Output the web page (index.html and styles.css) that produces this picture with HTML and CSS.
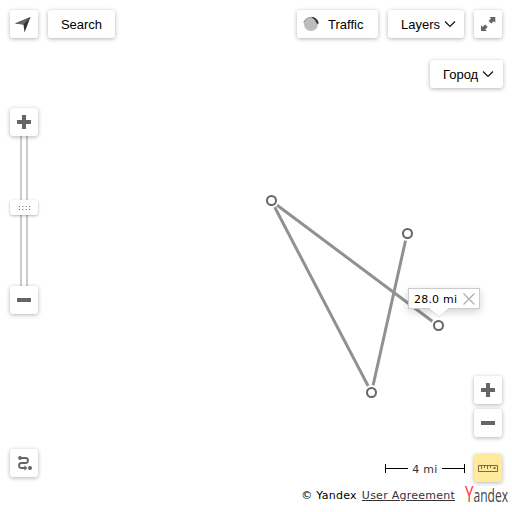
FILE: index.html
```
<!DOCTYPE html>
<html lang="en">
<head>
<meta charset="utf-8">
<title>Map</title>
<link rel="stylesheet" href="styles.css">
</head>
<body>
<div class="map">
  <svg class="route" viewBox="0 0 512 512">
    <g class="line">
      <path d="M407 234 371.500 392.500 271.500 201 438 325.500"/>
    </g>
    <g class="halo">
      <circle cx="271.500" cy="200.500" r="7.500"/><circle cx="407.500" cy="233.500" r="7.500"/><circle cx="371.500" cy="392.500" r="7.500"/><circle cx="438.500" cy="325.500" r="7.500"/>
    </g>
    <g class="node">
      <circle cx="271.500" cy="200.500" r="4.500"/><circle cx="407.500" cy="233.500" r="4.500"/><circle cx="371.500" cy="392.500" r="4.500"/><circle cx="438.500" cy="325.500" r="4.500"/>
    </g>
  </svg>
  <div class="balloon"><span>28.0 mi</span>
    <svg width="12" height="12" viewBox="0 0 12 12"><path d="M.5.5l11 11M11.500.5l-11 11" fill="none" stroke="#aaa" stroke-width="1.100"/></svg>
    <svg class="tail" width="20" height="10" viewBox="0 0 20 10"><path d="M0 0H20L10 9Z" fill="#fff"/><path d="M0 .5 10 9 20 .5" fill="none" stroke="#ccc" stroke-width=".7"/></svg>
  </div>

  <div class="controls">
    <div class="left">
      <div class="row">
        <button class="btn icon"><svg width="28" height="28" viewBox="0 0 28 28"><path d="M5 13.500 20.500 7 14.500 22.500 13.500 14.500Z" fill="#333"/><path d="M5 13.500 20.500 7 13.500 14.500Z" fill="#666"/></svg></button>
        <button class="btn search">Search</button>
      </div>
      <div class="slider">
        <button class="btn icon"><svg width="28" height="28" viewBox="0 0 28 28"><path d="M12 7h4v5h5v4h-5v5h-4v-5H7v-4h5z" fill="#666"/></svg></button>
        <div class="track"><div class="handle"><svg width="11" height="4" viewBox="0 0 11 4"><path d="M0 .5h11M0 3.500h11" stroke="#666" stroke-dasharray="1 2.330"/></svg></div></div>
        <button class="btn icon"><svg width="28" height="28" viewBox="0 0 28 28"><path d="M7 12h14v4H7z" fill="#666"/></svg></button>
      </div>
      <button class="btn icon route-btn"><svg width="28" height="28" viewBox="0 0 28 28"><circle cx="10" cy="9" r="1.900" fill="#666"/><circle cx="20" cy="19" r="2" fill="#666"/><path d="M10 9H15.500Q18 9 18 11.500T15.500 14H11.500Q9 14 9 16.500T11.500 19H15" fill="none" stroke="#666" stroke-width="1.800"/><path d="M14.500 16.200 17.300 19 14.500 21.800Z" fill="#666"/></svg></button>
    </div>

    <div class="right">
      <div class="row">
        <button class="btn traffic"><svg width="16" height="16" viewBox="0 0 16 16"><circle cx="8" cy="8" r="7" fill="#bcbcbc"/><path d="M.8 7A7 7 0 0 1 8 1.500" fill="none" stroke="#999" stroke-width="1.200"/><path d="M8 .8Q14.500 1.200 15.700 7.500L14.200 8Q12.500 3.500 8 .8Z" fill="#333"/></svg><span>Traffic</span></button>
        <button class="btn layers"><span>Layers</span><svg width="12" height="8" viewBox="0 0 12 8"><path d="M1 1.500 6 6.500 11 1.500" fill="none" stroke="#111" stroke-width="1.200"/></svg></button>
        <button class="btn icon"><svg width="28" height="28" viewBox="0 0 28 28"><path d="M15.500 7H21.300V12.800L19.600 11.300 17.400 13.600 14.600 10.900 17 8.600ZM7 15.200 8.700 16.900 11.100 14.400 13.700 17.100 11.300 19.400 12.900 21H7Z" fill="#666"/></svg></button>
      </div>
      <button class="btn city"><span>Город</span><svg width="12" height="8" viewBox="0 0 12 8"><path d="M1 1.500 6 6.500 11 1.500" fill="none" stroke="#111" stroke-width="1.200"/></svg></button>
      <div class="zoom">
        <button class="btn icon"><svg width="28" height="28" viewBox="0 0 28 28"><path d="M12 7h4v5h5v4h-5v5h-4v-5H7v-4h5z" fill="#666"/></svg></button>
        <button class="btn icon"><svg width="28" height="28" viewBox="0 0 28 28"><path d="M7 12h14v4H7z" fill="#666"/></svg></button>
      </div>
      <div class="measure">
        <div class="scale"><i></i><span>4 mi</span><i class="end"></i></div>
        <button class="btn icon active"><svg width="28" height="28" viewBox="0 0 28 28"><path d="M4.500 11.500h19v6h-19z" fill="none" stroke="#776c48"/><path d="M7.500 12v3M10.500 12v2M13.500 12v3M16.500 12v2" stroke="#776c48"/><path d="M19.500 13h2v2h-2z" fill="#776c48"/></svg></button>
      </div>
      <div class="legal"><span>© Yandex</span><a>User Agreement</a>
        <svg class="logo" width="44" height="28" viewBox="0 0 44 28"><text transform="translate(1 21) scale(.72 1)" font-size="21" fill="#444"><tspan fill="#f33">Y</tspan><tspan font-size="19" textLength="48" lengthAdjust="spacingAndGlyphs">andex</tspan></text></svg>
      </div>
    </div>
  </div>
</div>
</body>
</html>
```
FILE: styles.css
```
* { box-sizing: border-box; }
body { margin: 0; background: #fff; }
.map { position: relative; width: 512px; height: 512px; overflow: hidden; }
.route { position: absolute; left: 0; top: 0; width: 512px; height: 512px; }
.line { fill: none; stroke: #919191; stroke-width: 3; }
.halo { fill: #fff; }
.node { fill: #fff; stroke: #666; stroke-width: 2; }
.balloon {
  position: absolute; left: 408px; top: 288px; width: 72px; height: 21px;
  display: flex; align-items: center; justify-content: space-between;
  padding: 1px 4px 0 5px; background: #fff; border: 1px solid #ccc;
  box-shadow: 0 3px 9px rgba(0,0,0,.18);
  font: 11px "DejaVu Sans", sans-serif; letter-spacing: .2px; color: #000; white-space: nowrap;
}
.tail { position: absolute; left: 20px; top: 19px; }
.controls { position: relative; display: flex; justify-content: space-between; height: 512px; padding: 10px 4px 0 10px; }
.row { display: flex; gap: 10px; }
.btn {
  display: flex; align-items: center; height: 28px; padding: 0; border: 0;
  border-radius: 3px; background: #fff; box-shadow: 0 1px 4px rgba(0,0,0,.3);
  font: 13px "Liberation Sans", Arial, sans-serif; color: #000;
}
.btn svg { display: block; flex: none; }
.icon { width: 28px; }
.search { width: 67px; justify-content: center; }
.slider { display: flex; flex-direction: column; width: 28px; margin-top: 70px; }
.slider .icon { position: relative; }
.track {
  width: 8px; height: 150px; margin-left: 10px; padding-top: 64px;
  border: solid #ccc; border-width: 0 2px;
}
.handle {
  display: flex; align-items: center; justify-content: center;
  width: 28px; height: 15px; margin-left: -12px; border-radius: 3px;
  background: #fff; box-shadow: 0 1px 3px rgba(0,0,0,.3);
}
.route-btn { margin-top: 135px; }
.right { display: flex; flex-direction: column; align-items: flex-end; }
.right > .row, .zoom, .measure { margin-right: 6px; }
.traffic { width: 81px; padding-left: 6px; gap: 9px; }
.layers { width: 76px; padding-left: 13px; gap: 4px; }
.city { width: 73px; margin: 22px 5px 0 0; padding-left: 13px; gap: 4px; }
.zoom { display: flex; flex-direction: column; gap: 5px; margin-top: 288px; }
.measure { display: flex; align-items: center; gap: 9px; margin-top: 17px; }
.active { background: #ffe99c; }
.scale { display: flex; align-items: center; width: 80px; font: 11px "DejaVu Sans", sans-serif; letter-spacing: .25px; color: #333; }
.scale span { padding: 2px 4px 0; white-space: nowrap; }
.scale i { flex: 1; height: 9px; border-left: 1px solid #000; background: linear-gradient(#000,#000) 0 4px / 100% 1px no-repeat; }
.scale .end { border-left: 0; border-right: 1px solid #000; }
.legal { display: flex; align-items: center; height: 28px; font: 11px/22px "DejaVu Sans", sans-serif; letter-spacing: .25px; color: #000; white-space: nowrap; margin-top: -1px; }
.legal span, .legal a { padding-top: 2px; }
.legal a { margin: 0 9px 0 5px; color: #333; text-decoration: underline; }
.logo { font-family: "Open Sans", sans-serif; letter-spacing: 0; overflow: visible; }
```
